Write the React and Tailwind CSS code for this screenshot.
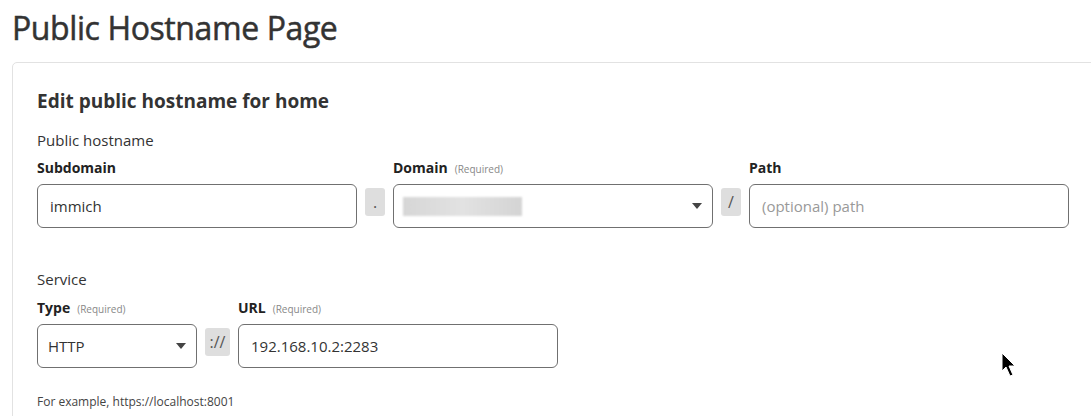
import React from "react";

const font = { fontFamily: '"Open Sans", "Noto Sans", sans-serif' };

function Caret() {
  return (
    <svg width="10" height="6" viewBox="0 0 10 6" className="shrink-0">
      <path d="M0 0 L10 0 L5 6 Z" fill="#444" />
    </svg>
  );
}

function Label({ children, req }) {
  return (
    <div className="flex items-baseline gap-[7px] h-[18px] mb-[7px]">
      <span className="text-[14px] font-bold text-[#222] leading-[18px]">{children}</span>
      {req && <span className="text-[10px] text-[#888] leading-[18px]">(Required)</span>}
    </div>
  );
}

function Addon({ children, w = "w-[20px]" }) {
  return (
    <div className={`${w} h-[28px] mt-[4px] shrink-0 rounded-[3px] bg-[#dedede] flex items-center justify-center text-[16px] text-[#555]`}>
      {children}
    </div>
  );
}

export default function App() {
  return (
    <div className="bg-white w-[1091px] h-[416px] overflow-hidden relative" style={font}>
      <h1 className="text-[32px] leading-[40px] font-medium text-[#333] [-webkit-text-stroke:0.5px_#333] pl-[12px] pt-[8px] h-[62px] tracking-[-0.4px]">
        Public Hostname Page
      </h1>
      <div className="ml-[12px] w-[1100px] border border-[#e2e2e2] rounded-[5px] pl-[24px] pt-[26px] pb-[40px]">
        <h2 className="text-[19px] font-bold text-[#333] leading-[24px] mb-[17px]">
          Edit public hostname for home
        </h2>
        <div className="text-[15px] text-[#333] leading-[20px] mb-[9px]">Public hostname</div>
        <div className="flex items-start">
          <div className="w-[320px] shrink-0">
            <Label>Subdomain</Label>
            <div className="h-[44px] border border-[#707070] rounded-[6px] flex items-center px-[12px] text-[15px] text-[#333]">
              immich
            </div>
          </div>
          <div className="mx-[8px] mt-[25px]">
            <Addon>.</Addon>
          </div>
          <div className="w-[320px] shrink-0">
            <Label req>Domain</Label>
            <div className="h-[44px] border border-[#707070] rounded-[6px] flex items-center justify-between pl-[9px] pr-[10px]">
              <div className="w-[119px] h-[19px] bg-gradient-to-r from-[#d6d6d6] via-[#e2e2e2] to-[#d4d4d4] blur-[1px]" />
              <Caret />
            </div>
          </div>
          <div className="mx-[8px] mt-[25px]">
            <Addon>/</Addon>
          </div>
          <div className="w-[320px] shrink-0">
            <Label>Path</Label>
            <div className="h-[44px] border border-[#707070] rounded-[6px] flex items-center px-[12px] text-[15px] text-[#999]">
              (optional) path
            </div>
          </div>
        </div>
        <div className="text-[15px] text-[#333] leading-[20px] mt-[41px] mb-[10px]">Service</div>
        <div className="flex items-start">
          <div className="w-[160px] shrink-0">
            <Label req>Type</Label>
            <div className="h-[44px] border border-[#707070] rounded-[6px] flex items-center justify-between pl-[10px] pr-[10px] text-[15px] text-[#333]">
              HTTP
              <Caret />
            </div>
          </div>
          <div className="mx-[8px] mt-[25px]">
            <Addon w="w-[25px]">://</Addon>
          </div>
          <div className="w-[320px] shrink-0">
            <Label req>URL</Label>
            <div className="h-[44px] border border-[#707070] rounded-[6px] flex items-center px-[12px] text-[15px] text-[#333]">
              192.168.10.2:2283
            </div>
          </div>
        </div>
        <div className="text-[12px] text-[#444] mt-[26px] leading-[16px]">For example, https://localhost:8001</div>
      </div>
      <svg className="absolute left-[1001px] top-[352px]" width="16" height="26" viewBox="0 0 16 26">
        <path d="M1 1 L1 19 L5 15 L9 24 L12 23 L8 14 L14 14 Z" fill="#000" stroke="#fff" strokeWidth="1" />
      </svg>
    </div>
  );
}
